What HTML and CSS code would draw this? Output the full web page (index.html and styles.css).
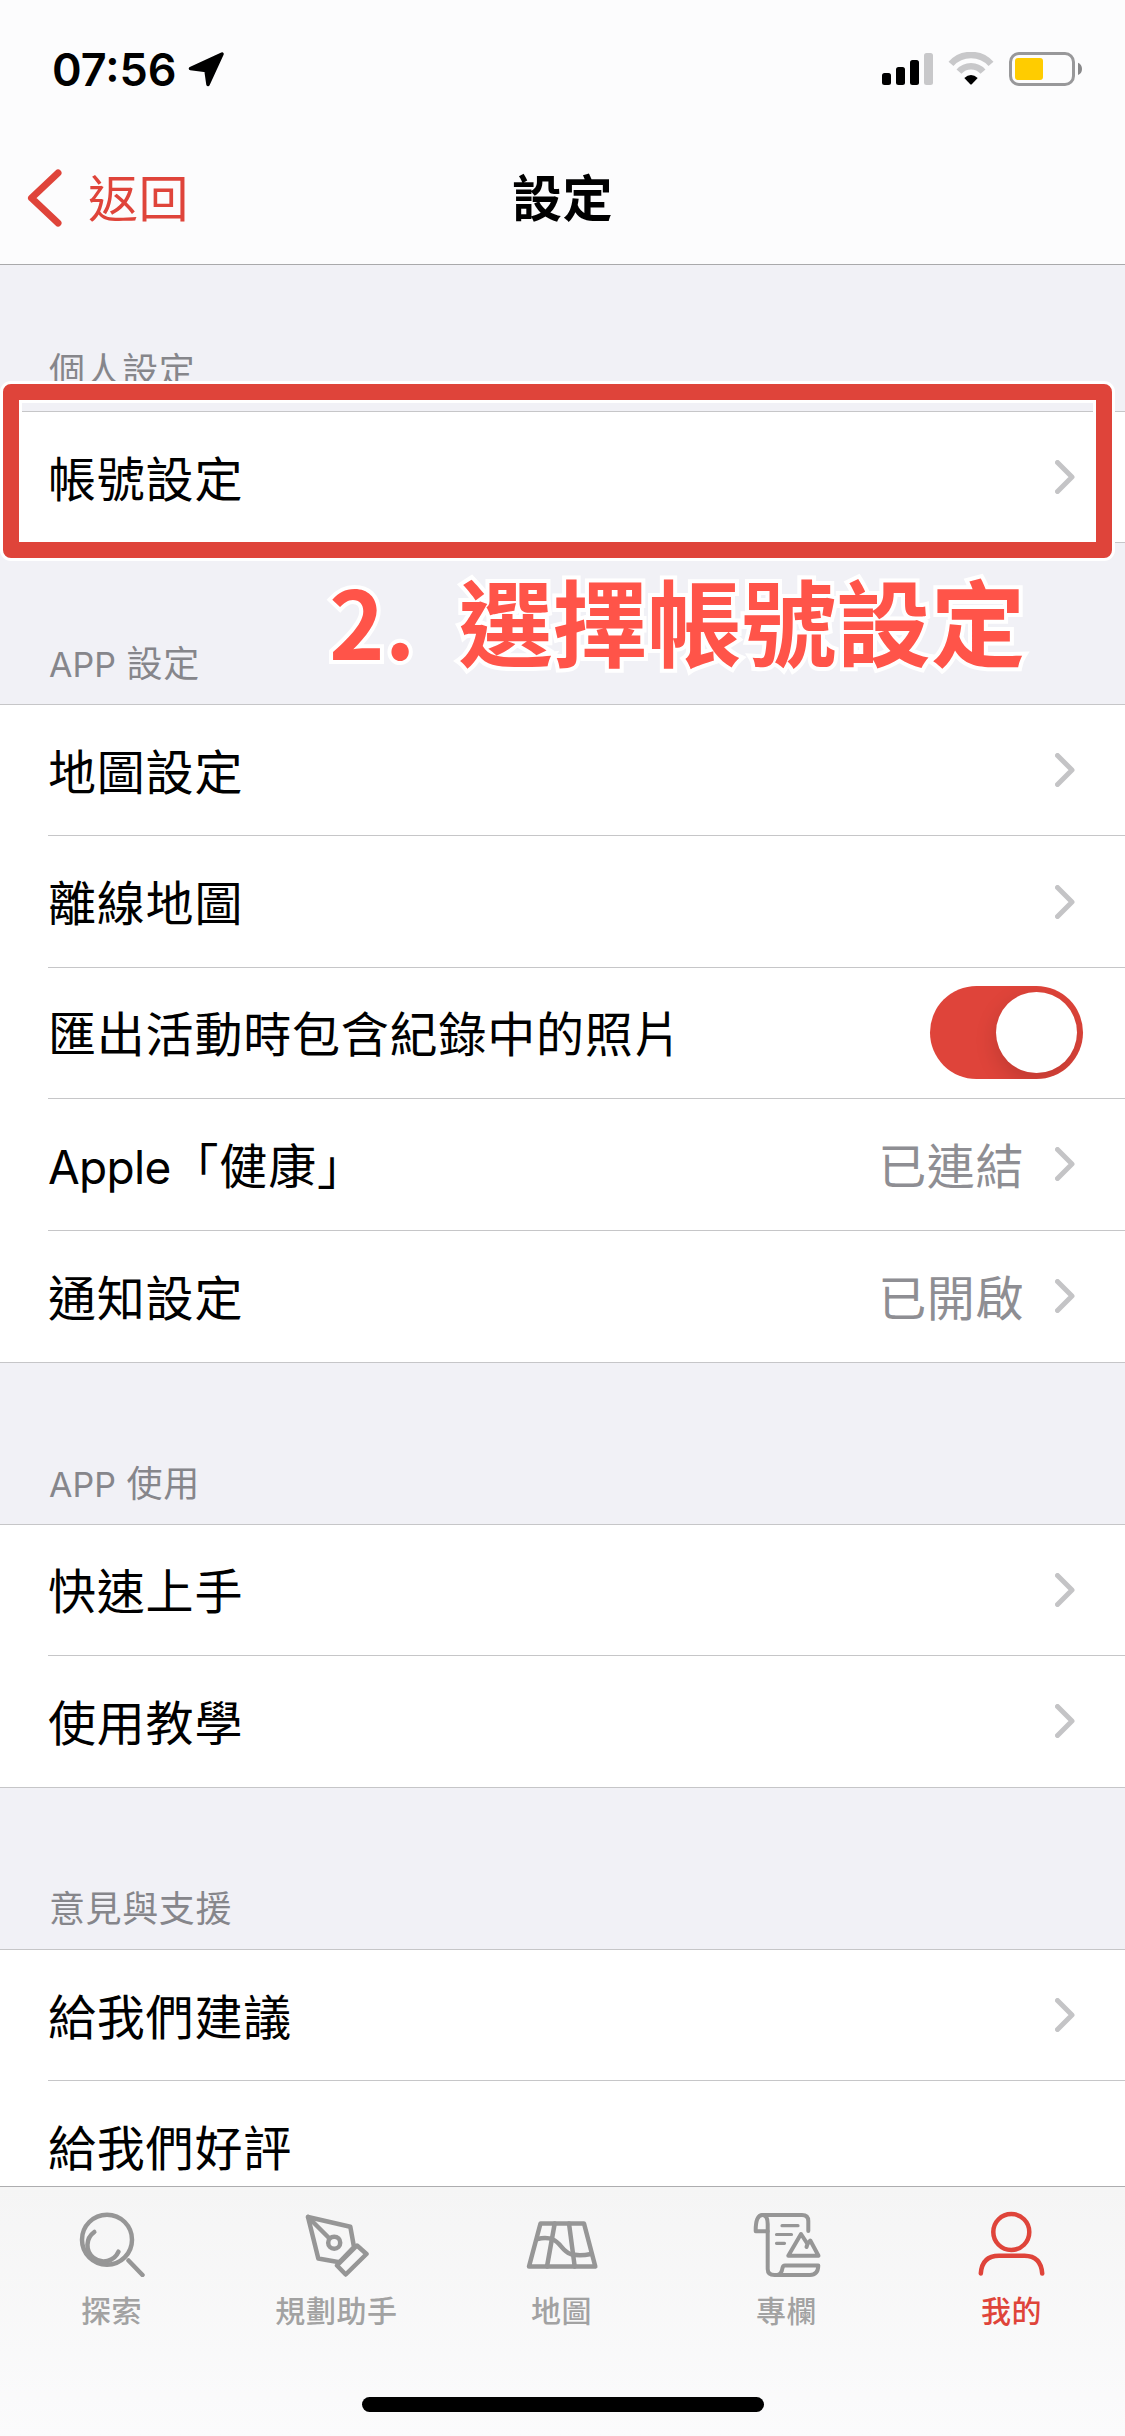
FILE: index.html
```html
<!DOCTYPE html>
<html lang="zh-Hant">
<head>
  <meta charset="UTF-8">
  <title>設定</title>
  <link rel="stylesheet" href="styles.css">
</head>
<body>

<div class="screen">

  <header class="header">
    <div class="statusbar">
      <span class="time">07:56</span>
      <svg class="location" width="36" height="35" viewBox="0 0 36 35">
        <path d="M34 2 L20 32.5 L18 18.500 L2.5 16.500 Z" fill="#000" stroke="#000" stroke-width="3.500" stroke-linejoin="round"/>
      </svg>
      <svg class="status-icons" width="202" height="34" viewBox="0 0 202 34">
        <!-- signal -->
        <rect x="0" y="21" width="9" height="12" rx="2.500"/>
        <rect x="14" y="15" width="9" height="18" rx="2.500"/>
        <rect x="28" y="8" width="9" height="25" rx="2.500"/>
        <rect x="42" y="1" width="9" height="32" rx="2.500" fill="#c8c8ca"/>
        <!-- wifi -->
        <path d="M69 11.900 A27 27 0 0 1 109 11.900" fill="none" stroke="#c8c8ca" stroke-width="6.600"/>
        <path d="M77 19.600 A16 16 0 0 1 101 19.600" fill="none" stroke="#c8c8ca" stroke-width="6.600"/>
        <path d="M82.300 26 Q89 20.200 95.700 26 L90 32 Q89 33 88 32 Z"/>
        <!-- battery -->
        <rect x="128.500" y="1.500" width="63" height="31" rx="8.500" fill="none" stroke="#98989a" stroke-width="3"/>
        <rect x="133" y="6" width="28" height="22" rx="3" fill="#ffcc00"/>
        <path d="M196 10.700 Q200 12.500 200 17 Q200 21.300 196 23 Z" fill="#88888a"/>
      </svg>
    </div>

    <div class="navbar">
      <a class="back" href="#">
        <svg width="36" height="58" viewBox="0 0 36 58">
          <path d="M31 4 L4.500 29 L31 54" fill="none" stroke="#df443a" stroke-width="7" stroke-linecap="round" stroke-linejoin="round"/>
        </svg>
        <span>返回</span>
      </a>
      <h1 class="title">設定</h1>
    </div>
  </header>

  <main class="content">
    <h2 class="section-title first">個人設定</h2>
    <ul class="group single">
      <li class="row"><span class="label">帳號設定</span><svg class="chevron" viewBox="0 0 20 34"><path d="M2.500 2.500 L17 17 L2.500 31.500"/></svg></li>
    </ul>

    <h2 class="section-title"><span class="latin">APP</span> 設定</h2>
    <ul class="group">
      <li class="row"><span class="label">地圖設定</span><svg class="chevron" viewBox="0 0 20 34"><path d="M2.500 2.500 L17 17 L2.500 31.500"/></svg></li>
      <li class="row"><span class="label">離線地圖</span><svg class="chevron" viewBox="0 0 20 34"><path d="M2.500 2.500 L17 17 L2.500 31.500"/></svg></li>
      <li class="row"><span class="label">匯出活動時包含紀錄中的照片</span><span class="toggle"><span class="knob"></span></span></li>
      <li class="row"><span class="label"><span class="latin">Apple</span>「健康」</span><span class="value">已連結</span><svg class="chevron" viewBox="0 0 20 34"><path d="M2.500 2.500 L17 17 L2.500 31.500"/></svg></li>
      <li class="row"><span class="label">通知設定</span><span class="value">已開啟</span><svg class="chevron" viewBox="0 0 20 34"><path d="M2.500 2.500 L17 17 L2.500 31.500"/></svg></li>
    </ul>

    <h2 class="section-title"><span class="latin">APP</span> 使用</h2>
    <ul class="group">
      <li class="row"><span class="label">快速上手</span><svg class="chevron" viewBox="0 0 20 34"><path d="M2.500 2.500 L17 17 L2.500 31.500"/></svg></li>
      <li class="row"><span class="label">使用教學</span><svg class="chevron" viewBox="0 0 20 34"><path d="M2.500 2.500 L17 17 L2.500 31.500"/></svg></li>
    </ul>

    <h2 class="section-title">意見與支援</h2>
    <ul class="group">
      <li class="row"><span class="label">給我們建議</span><svg class="chevron" viewBox="0 0 20 34"><path d="M2.500 2.500 L17 17 L2.500 31.500"/></svg></li>
      <li class="row"><span class="label">給我們好評</span></li>
    </ul>
  </main>

  <footer class="footer">
    <nav class="tabbar">
      <a class="tab" href="#">
        <svg viewBox="0 0 75 75">
          <circle cx="32" cy="37.700" r="25"/>
          <path d="M19.300 30 A16.200 16.200 0 1 0 43.500 49.700"/>
          <path d="M53.500 58.500 L67.500 73"/>
        </svg>
        <span>探索</span>
      </a>
      <a class="tab" href="#">
        <svg viewBox="0 0 75 75">
          <path d="M8 15 L50.300 24.700 L54 45 L39.300 60.300 L18.300 56.500 Z"/>
          <path d="M8 15 L29 36"/>
          <circle cx="34.200" cy="40.700" r="6"/>
          <path d="M57 43.500 L66.500 52 L45.700 72.500 L37 63.500 Z"/>
        </svg>
        <span>規劃助手</span>
      </a>
      <a class="tab" href="#">
        <svg viewBox="0 0 75 75">
          <path d="M15.500 21.500 H59 L70.300 64.500 H4 Z"/>
          <path d="M29.700 21.500 L22 64.500 M44 21.500 L49.700 64.500"/>
          <path d="M12.500 37 Q21.500 35 28 37.500 C36 41 37 49 45.500 52 Q54 54.500 66 52"/>
        </svg>
        <span>地圖</span>
      </a>
      <a class="tab" href="#">
        <svg class="thin" viewBox="0 0 75 75">
          <path d="M17.700 29.300 H5.700 Q5.500 12.900 12.500 12.900 H52 Q58.300 12.900 58.300 19 V29"/>
          <path d="M12.500 12.900 Q17.700 13 17.700 22 V67 Q17.700 73 24.500 73 H60 Q68 73 68.300 63.500 H35 Q33 63.500 32.500 66 Q31.500 73 26.500 73"/>
          <path class="lines" d="M32 23.700 H48 M26.500 32.500 H41.500 M26.500 41.300 H34.500"/>
          <path d="M38.300 53.700 L51 32 L57.500 42 L60.300 38.500 L68.500 53.700 Z M57.500 42 L56.500 45"/>
        </svg>
        <span>專欄</span>
      </a>
      <a class="tab active" href="#">
        <svg viewBox="0 0 75 75">
          <circle cx="36.300" cy="30" r="18"/>
          <path d="M5.800 71.500 Q7 53.700 24 53.700 H49.500 Q66 54 67.200 71.500"/>
        </svg>
        <span>我的</span>
      </a>
    </nav>
    <div class="home-indicator"></div>
  </footer>

  <!-- tutorial step markers on top of the list -->
  <div class="highlight"></div>
  <div class="step">2.&nbsp; 選擇帳號設定</div>

</div>

</body>
</html>
```

FILE: styles.css
```css
* {
  box-sizing: border-box;
}

body {
  margin: 0;
  font-family: "Noto Sans CJK TC", sans-serif;
  color: #000;
}

a {
  text-decoration: none;
}

.screen {
  position: relative;
  display: flex;
  flex-direction: column;
  width: 1125px;
  height: 2436px;
  overflow: hidden;
  background-color: #f1f1f6;
}

/* header */
.header {
  height: 265px;
  flex: none;
  background-color: #fcfcfd;
  border-bottom: 1px solid #a9a9ab;
}

.statusbar {
  display: flex;
  align-items: center;
  height: 132px;
  padding: 6px 41px 0 52px;
}

.time {
  width: 136px;
  font-family: Inter, sans-serif;
  font-size: 45px;
  font-weight: 600;
}

.status-icons {
  margin-left: auto;
}

.navbar {
  display: grid;
  grid-template-columns: 1fr auto 1fr;
  align-items: center;
  height: 132px;
  padding: 0 27px;
}

.back {
  display: flex;
  align-items: center;
  gap: 25px;
  color: #df443a;
  font-size: 50px;
  line-height: 58px;
}

.back span {
  padding-bottom: 7px;
  letter-spacing: 0.600px;
}

.title {
  margin: 0;
  padding-bottom: 7px;
  font-size: 50px;
  line-height: 58px;
  font-weight: bold;
  letter-spacing: 0.600px;
}

/* list */
.content {
  flex: 1;
  min-height: 0;
  overflow: hidden;
}

.section-title {
  height: 161px;
  margin: 0;
  padding: 92px 48px 0 49px;
  color: #86868b;
  font-size: 36px;
  line-height: 52px;
  font-weight: normal;
  letter-spacing: 0.600px;
}

.section-title.first {
  height: 146px;
  padding-top: 77px;
}

.section-title .latin {
  margin-right: 2px;
  font-size: 34px;
  letter-spacing: 0;
}

.group {
  margin: 0;
  padding: 0 0 0 48px;
  list-style: none;
  background-color: #fff;
  border-top: 1px solid #c6c6c8;
  border-bottom: 1px solid #c6c6c8;
}

.row {
  display: flex;
  align-items: center;
  height: 131.400px;
  padding-right: 50px;
  border-bottom: 1px solid #c6c6c8;
}

.row:last-child {
  height: 131px;
  border-bottom: none;
}

.single .row {
  height: 130px;
}

.label {
  flex: 1;
  padding-bottom: 3px;
  font-size: 48px;
  letter-spacing: 0.800px;
}

.latin {
  font-family: Inter, sans-serif;
  font-size: 46px;
  letter-spacing: -0.700px;
}

.value {
  padding-bottom: 3px;
  margin-right: 31px;
  color: #8e8e93;
  font-size: 48px;
  letter-spacing: 0.600px;
}

.chevron {
  width: 20px;
  height: 34px;
  fill: none;
  stroke: #c4c4c6;
  stroke-width: 5;
  stroke-linecap: round;
  stroke-linejoin: round;
}

.toggle {
  display: flex;
  justify-content: flex-end;
  width: 153px;
  height: 93px;
  margin-right: -8px;
  padding: 6px;
  border-radius: 47px;
  background-color: #df443a;
  overflow: hidden;
}

.knob {
  width: 81px;
  height: 81px;
  border-radius: 50%;
  background-color: #fff;
  box-shadow: 0 8px 22px rgba(0, 0, 0, 0.15);
}

/* bottom tabs */
.footer {
  flex: none;
  height: 250px;
  border-top: 1px solid #adadaf;
  background: linear-gradient(#f5f5f5, #fbfbfc);
}

.tabbar {
  display: flex;
  height: 210px;
}

.tab {
  display: flex;
  flex: 1;
  flex-direction: column;
  align-items: center;
  padding-top: 15px;
  color: #a2a2a2;
  font-size: 30px;
  line-height: 44px;
  font-weight: 500;
  letter-spacing: 0.600px;
}

.tab svg {
  width: 75px;
  height: 75px;
  margin-bottom: 10px;
  fill: none;
  stroke: #969696;
  stroke-width: 4.500;
  stroke-linecap: round;
  stroke-linejoin: round;
}

.tab span {
  padding-right: 2px;
}

.tab svg.thin {
  stroke-width: 4;
}

.tab svg .lines {
  stroke-width: 3.200;
}

.tab.active {
  color: #df443a;
}

.tab.active svg {
  stroke: #df443a;
}

.home-indicator {
  width: 402px;
  height: 15px;
  margin: 0 auto;
  border-radius: 8px;
  background-color: #000;
}

/* step markers */
.highlight {
  position: absolute;
  top: 384px;
  left: 3px;
  width: 1109px;
  height: 174px;
  border: 16px solid #df443a;
  border-radius: 8px;
  box-shadow: 0 0 0 3px #fff, inset 0 0 0 3px #fff;
}

.step {
  position: absolute;
  top: 549px;
  left: 329px;
  color: #ff5449;
  font-size: 94.500px;
  line-height: 140px;
  font-weight: bold;
  white-space: nowrap;
  -webkit-text-stroke: 8px #fff;
  paint-order: stroke fill;
}
```
